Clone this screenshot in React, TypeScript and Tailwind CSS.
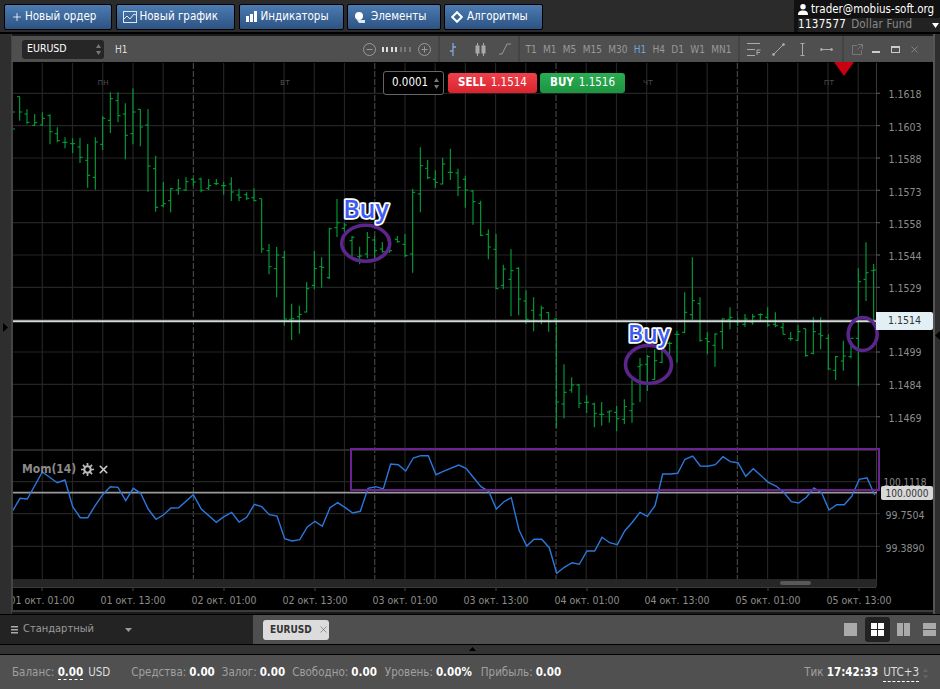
import { Plus, X } from "lucide-react";

type Bar = [number, number, number, number, number];

// x, high, low, open, close read off the chart in 3x crops
const barsA: Bar[] = [
  [59, 20, 92, 20, 66], [81, 58, 103, 72, 97], [104, 72, 108, 106, 98], [127, 67, 107, 105, 85],
  [150, 73, 163, 77, 125], [172, 112, 157, 131, 152], [195, 142, 175, 157, 157], [218, 145, 189, 161, 161],
  [240, 143, 219, 171, 202], [263, 162, 293, 211, 256], [286, 142, 299, 262, 156], [308, 78, 180, 163, 85],
  [331, 7, 129, 91, 26], [354, 7, 97, 32, 77], [376, 40, 208, 72, 136], [399, -5, 163, 131, 66],
  [421, 57, 169, 58, 111], [444, 57, 305, 105, 228], [467, 197, 365, 236, 352], [490, 276, 352, 347, 341],
  [512, 295, 367, 332, 296], [535, 267, 314, 300, 295], [558, 262, 302, 300, 275], [580, 263, 288, 268, 276],
  [603, 263, 307, 267, 301], [626, 267, 300, 295, 287], [649, 267, 285, 281, 281], [671, 275, 314, 287, 287],
  [694, 262, 333, 282, 306], [717, 296, 334, 315, 322], [740, 307, 330, 314, 325], [762, 295, 334, 323, 332],
  [785, 326, 488, 326, 477], [807, 462, 553, 482, 530], [830, 471, 622, 536, 495], [853, 483, 707, 502, 687],
  [875, 641, 750, 688, 686], [898, 647, 731, 680, 673], [920, 576, 667, 666, 596], [943, 483, 598, 586, 536],
];

const barsB: Bar[] = [
  [5, 382, 473, 410, 412], [28, 293, 447, 443, 296], [51, 207, 321, 293, 278], [73, 278, 305, 295, 285],
  [96, 318, 378, 332, 322], [119, 350, 403, 380, 378], [142, 306, 385, 372, 322], [164, 318, 387, 330, 362],
  [187, 336, 368, 357, 365], [209, 330, 368, 330, 362], [232, 318, 338, 328, 335], [255, 312, 381, 343, 377],
  [278, 176, 428, 372, 187], [301, 52, 247, 192, 107], [323, 90, 148, 115, 143], [346, 121, 174, 148, 157],
  [368, 83, 163, 162, 102], [391, 56, 150, 127, 127], [414, 116, 198, 129, 172], [436, 137, 233, 148, 180],
  [459, 181, 284, 183, 215], [482, 212, 318, 220, 316], [505, 298, 388, 313, 351], [528, 312, 477, 358, 476],
  [550, 404, 478, 466, 417], [573, 358, 559, 448, 422], [596, 412, 556, 415, 507], [618, 481, 582, 513, 568],
  [641, 502, 604, 541, 574], [664, 527, 583, 555, 534], [686, 547, 605, 548, 575], [709, 563, 893, 567, 816],
  [732, 703, 865, 822, 787], [755, 742, 788, 780, 765], [777, 762, 834, 765, 820], [800, 796, 849, 817, 817],
  [823, 818, 892, 822, 850], [845, 816, 887, 853, 853], [868, 842, 878, 846, 843], [890, 828, 904, 847, 866],
  [913, 808, 882, 868, 830], [936, 750, 878, 842, 822],
];

const barsC: Bar[] = [
  [0, 384, 516, 410, 405], [22, 375, 483, 403, 380], [44, 358, 450, 448, 392], [66, 360, 400, 397, 358],
  [89, 335, 372, 340, 340], [111, 302, 398, 313, 313], [134, 187, 310, 307, 247], [157, 82, 270, 254, 212],
  [180, 202, 335, 221, 331], [202, 307, 373, 326, 335], [225, 310, 410, 346, 312], [247, 265, 358, 305, 267],
  [270, 232, 298, 268, 262], [293, 262, 288, 275, 275], [315, 252, 290, 283, 267], [338, 252, 284, 276, 260],
  [361, 250, 274, 254, 254], [383, 232, 290, 262, 285], [406, 247, 292, 283, 287], [429, 278, 313, 292, 313],
  [452, 306, 332, 326, 326], [474, 285, 333, 331, 305], [497, 296, 380, 296, 377], [520, 262, 373, 370, 305],
  [542, 262, 358, 312, 317], [565, 313, 420, 325, 417], [587, 378, 450, 421, 380], [610, 332, 422, 393, 378],
  [633, 345, 385, 380, 325], [655, 115, 468, 325, 155], [678, 37, 213, 148, 128], [701, 102, 270, 122, 120],
];

const momA = [
  38, 212, 60, 175, 82, 177, 127, 96, 172, 128, 195, 120, 218, 200, 241, 233, 263, 233, 286, 196, 308, 164, 331, 140,
  354, 142, 377, 182, 400, 145, 422, 160, 445, 208, 468, 238, 490, 225, 513, 204, 536, 203, 580, 164, 604, 207, 649, 247,
  672, 230, 695, 217, 717, 246, 740, 232, 763, 193, 785, 200, 808, 224, 831, 228, 854, 296, 876, 303, 899, 299, 922, 261,
  945, 244, 967, 259, 990, 203, 1013, 188, 1036, 203, 1058, 219, 1081, 214, 1104, 145, 1127, 140, 1150, 147, 1172, 72,
  1195, 74, 1217, 93, 1240, 54, 1262, 47, 1285, 47, 1308, 104, 1330, 94, 1376, 75, 1398, 85, 1410, 100,
];

const momB = [
  0, 100, 33, 140, 56, 154, 79, 207, 102, 185, 124, 173, 147, 270, 170, 318, 192, 298, 215, 298, 238, 323, 260, 400,
  283, 382, 306, 368, 328, 373, 351, 333, 374, 333, 396, 292, 419, 308, 442, 314, 464, 273, 487, 247, 510, 217, 532, 229,
  555, 197, 578, 102, 600, 102, 623, 100, 645, 58, 668, 48, 691, 78, 713, 79, 736, 74, 759, 50, 781, 65, 804, 68,
  827, 109, 850, 86, 895, 127, 918, 138, 941, 157, 964, 185, 986, 189, 1009, 172, 1032, 144, 1055, 159, 1077, 210,
  1100, 194, 1123, 194, 1145, 169, 1168, 118, 1191, 113, 1214, 165,
];

const toPoints = (values: number[], ox: number, oy: number) => {
  const out: string[] = [];
  for (let i = 0; i < values.length; i += 2) {
    out.push(`${(ox + values[i] / 3).toFixed(1)},${(oy + values[i + 1] / 3).toFixed(1)}`);
  }
  return out.join(" ");
};

const gridX = Array.from({ length: 28 }, (_, i) => 42.3 + 30.22 * i);
const gridY = Array.from({ length: 11 }, (_, i) => 93.3 + 32.34 * i);
const prices: [string, number][] = [
  ["1.1618", 94], ["1.1603", 127], ["1.1588", 159], ["1.1573", 192], ["1.1558", 224], ["1.1544", 256],
  ["1.1529", 288], ["1.1499", 352], ["1.1484", 385], ["1.1469", 418],
];
const dates: [string, number][] = [
  ["01 окт. 01:00", 42], ["01 окт. 13:00", 133], ["02 окт. 01:00", 224], ["02 окт. 13:00", 315],
  ["03 окт. 01:00", 405], ["03 окт. 13:00", 496], ["04 окт. 01:00", 587], ["04 окт. 13:00", 677],
  ["05 окт. 01:00", 768], ["05 окт. 13:00", 859],
];
const days: [string, number][] = [["пн", 103], ["вт", 285], ["чт", 648], ["пт", 829]];
const frames = ["T1", "M1", "M5", "M15", "M30", "H1", "H4", "D1", "W1", "MN1"];

function OhlcBars({ bars, ox, oy }: { bars: Bar[]; ox: number; oy: number }) {
  return (
    <g className="stroke-[#00a33a]" strokeWidth={1.1} fill="none">
      {bars.map(([x, hi, lo, open, close]) => {
        const px = ox + x / 3;
        return (
          <g key={x}>
            <line x1={px} x2={px} y1={oy + hi / 3} y2={oy + lo / 3} />
            <line x1={px - 2.5} x2={px} y1={oy + open / 3} y2={oy + open / 3} />
            <line x1={px} x2={px + 2.5} y1={oy + close / 3} y2={oy + close / 3} />
          </g>
        );
      })}
    </g>
  );
}

function Chart() {
  return (
    <svg viewBox="12 62 921 550" className="block h-[550px] w-[921px]">
      <rect x="12" y="62" width="921" height="550" fill="#000" />
      {gridX.map((x, i) =>
        i % 6 === 5 ? (
          <line key={x} x1={x} x2={x} y1="63" y2="579" stroke="#444" strokeWidth="1.2" strokeDasharray="6 2" />
        ) : (
          <line key={x} x1={x} x2={x} y1="63" y2="579" stroke="#242424" strokeWidth="1.2" />
        ),
      )}
      {gridY.map((y) => (
        <line key={y} x1="12" x2="880" y1={y} y2={y} stroke="#242424" strokeWidth="1.2" />
      ))}
      {[481.7, 513.7, 546.3].map((y) => (
        <line key={y} x1="12" x2="880" y1={y} y2={y} stroke="#242424" strokeWidth="1.2" />
      ))}
      <line x1="12" x2="876" y1="450" y2="450" stroke="#363636" strokeWidth="1.5" />
      <line x1="876.5" x2="876.5" y1="63" y2="587" stroke="#3a3a3a" />

      {days.map(([d, x]) => (
        <text key={d} x={x} y="85" textAnchor="middle" fontSize="9.5" fill="#4a4a4a">
          {d}
        </text>
      ))}

      <OhlcBars bars={barsA} ox={0} oy={90} />
      <OhlcBars bars={barsB} ox={320} oy={130} />
      <OhlcBars bars={barsC} ox={640} oy={230} />
      <line x1="12" x2="15" y1="129" y2="129" stroke="#00a33a" />
      <line x1="12" x2="15" y1="112" y2="112" stroke="#00a33a" />

      <line x1="12" x2="877" y1="321.3" y2="321.3" stroke="#d5dcdc" strokeWidth="2" />
      <line x1="12" x2="877" y1="492.6" y2="492.6" stroke="#9a9a9a" strokeWidth="1.6" />

      <polyline points={toPoints(momA, 0, 440)} fill="none" stroke="#2b78dc" strokeWidth="1.4" />
      <polyline points={toPoints(momB, 470, 440)} fill="none" stroke="#2b78dc" strokeWidth="1.4" />

      <rect x="351" y="449" width="528" height="41" fill="none" stroke="#6b2391" strokeWidth="2" />
      <ellipse cx="365.7" cy="243.3" rx="24" ry="18" fill="none" stroke="#5c258c" strokeWidth="3.6" />
      <ellipse cx="648.5" cy="364.5" rx="23" ry="19" fill="none" stroke="#5c258c" strokeWidth="3.6" />
      <ellipse cx="862.7" cy="334" rx="14.5" ry="16.5" fill="none" stroke="#5c258c" strokeWidth="3.6" />

      {[[366, 218, 25], [649, 342, 23]].map(([x, y, size]) => (
        <text
          key={x}
          x={x}
          y={y}
          textAnchor="middle"
          fontSize={size}
          fontWeight="600"
          fill="#3f5cf2"
          stroke="#fff"
          strokeWidth="3.5"
          strokeLinejoin="round"
          paintOrder="stroke"
          className="font-['Open_Sans',sans-serif]"
        >
          Buy
        </text>
      ))}

      <polygon points="834,62 854,62 844,76" fill="#c9000f" />

      <rect x="12" y="579" width="864.5" height="8" fill="#262626" />
      <line x1="12" x2="876" y1="587.5" y2="587.5" stroke="#3a3a3a" />
      <rect x="780" y="581" width="31" height="4" rx="2" fill="#585858" />
      {dates.map(([, x]) => (
        <line key={x} x1={x} x2={x} y1="588" y2="591" stroke="#444" />
      ))}
      {dates.map(([d, x]) => (
        <text key={d} x={x} y="604" textAnchor="middle" fontSize="10.5" fill="#8d8d8d">
          {d}
        </text>
      ))}

      {gridY.map((y) => (
        <line key={y} x1="876" x2="880" y1={y} y2={y} stroke="#555" />
      ))}
      {prices.map(([p, y]) => (
        <text key={p} x="905" y={y + 4} textAnchor="middle" fontSize="10.5" fill="#8d8d8d">
          {p}
        </text>
      ))}
      <text x="905" y="486" textAnchor="middle" fontSize="10" fill="#8d8d8d">
        100.1118
      </text>
      {[["99.7504", 519], ["99.3890", 552]].map(([t, y]) => (
        <text key={t} x="905" y={y} textAnchor="middle" fontSize="10.5" fill="#8d8d8d">
          {t}
        </text>
      ))}
      <line x1="12.5" x2="12.5" y1="62" y2="612" stroke="#444" />
      <rect x="12" y="610" width="921" height="2" fill="#3c3c3c" />
    </svg>
  );
}

function NavButton({ width, icon, label, gap }: { width: string; icon: React.ReactNode; label: string; gap: string }) {
  return (
    <button
      className={`flex h-[26px] items-center rounded-[2px] border border-black bg-gradient-to-b from-[#4c7cb2] to-[#2d5383] pl-[6px] text-[11.5px] text-white ${width} ${gap}`}
    >
      {icon}
      {label}
    </button>
  );
}

function Spinner() {
  return (
    <svg width="5" height="11" viewBox="0 0 5 11" className="fill-[#777]">
      <path d="M2.5 0 5 4H0zM2.5 11 0 7h5z" />
    </svg>
  );
}

function Header() {
  return (
    <div className="flex h-[34px] items-start justify-between border-b-2 border-black bg-[#2b2b2b]">
      <div className="flex gap-[3.5px] pl-[4px] pt-[3.5px]">
        <NavButton width="w-[108px]" gap="gap-[2px]" icon={<Plus size={12} strokeWidth={1.6} />} label="Новый ордер" />
        <NavButton
          width="w-[119.5px]"
          gap="gap-[3px]"
          icon={
            <svg width="14" height="12" viewBox="0 0 14 12" fill="none" stroke="#dfe8f2">
              <rect x="0.5" y="0.5" width="13" height="11" />
              <path d="M1 8l3-3 3 3 4-5 2 1" />
            </svg>
          }
          label="Новый график"
        />
        <NavButton
          width="w-[105px]"
          gap="gap-[4px]"
          icon={
            <svg width="11" height="11" viewBox="0 0 11 11" fill="#fff">
              <path d="M0 5h3v6H0zM4 3h3v8H4zM8 0h3v11H8z" />
            </svg>
          }
          label="Индикаторы"
        />
        <NavButton
          width="w-[93.5px]"
          gap="gap-[5px]"
          icon={
            <svg width="12" height="12" viewBox="0 0 12 12" fill="#fff">
              <circle cx="5" cy="5" r="4" />
              <path d="M3 9h8v3H5z" fill="#dfe8f2" />
            </svg>
          }
          label="Элементы"
        />
        <NavButton
          width="w-[98.5px]"
          gap="gap-[4px]"
          icon={
            <svg width="12" height="12" viewBox="0 0 12 12" fill="none" stroke="#fff" strokeWidth="2">
              <path d="M6 1.2 10.8 6 6 10.800 1.200 6z" />
            </svg>
          }
          label="Алгоритмы"
        />
      </div>
      <div className="flex h-[32px] w-[146px] flex-col bg-[#111] pl-[4px]">
        <div className="flex h-[18px] items-center gap-[3px] pt-[1px] text-[11.5px] text-white">
          <svg width="10" height="11" viewBox="0 0 11 12" fill="#fff">
            <circle cx="5.500" cy="3" r="3" />
            <path d="M0 12c0-4 2-5 5.500-5S11 8 11 12z" />
          </svg>
          trader@mobius-soft.org
        </div>
        <div className="flex h-[14px] items-center bg-[#222] text-[11.5px]">
          <span className="tracking-[0.3px] text-white">1137577</span>
          <span className="ml-[5px] tracking-[0.2px] text-[#8a8a8a]">Dollar Fund</span>
          <svg width="7" height="5" viewBox="0 0 7 5" className="ml-auto mr-[1px] fill-white">
            <path d="M0 0h7L3.500 5z" />
          </svg>
        </div>
      </div>
    </div>
  );
}

function Toolbar() {
  return (
    <div className="flex h-[26px] w-[921px] items-center bg-[#4f4f4f] pl-[10px] text-[#999]">
      <div className="flex h-[19px] w-[82px] items-center justify-between rounded-[3px] bg-[#262626] pl-[5px] pr-[3px] text-[10.5px] text-white">
        EURUSD
        <Spinner />
      </div>
      <span className="ml-[11px] text-[10px] text-[#ddd]">H1</span>
      <div className="ml-[235px] flex items-center">
        <svg width="13" height="13" viewBox="0 0 13 13" fill="none" stroke="#999">
          <circle cx="6.500" cy="6.500" r="6" />
          <path d="M3.500 6.500h6" />
        </svg>
        <div className="ml-[6px] mr-[7px] flex gap-[2.5px]">
          {[0, 1, 2, 3, 4, 5, 6].map((i) => (
            <span key={i} className={`h-[5px] w-[2px] ${i < 4 ? "bg-[#ddd]" : "bg-[#777]"}`} />
          ))}
        </div>
        <svg width="13" height="13" viewBox="0 0 13 13" fill="none" stroke="#999">
          <circle cx="6.500" cy="6.500" r="6" />
          <path d="M3.500 6.500h6M6.500 3.500v6" />
        </svg>
      </div>
      <div className="ml-[7px] flex h-full w-[82px] items-center border-x-2 border-[#444] pl-[9px]">
        <svg width="8" height="13" viewBox="0 0 8 13" fill="none" stroke="#7fa8d8" strokeWidth="1.300">
          <path d="M4 0v13M1 8h3M4 4h3" />
        </svg>
        <svg width="11" height="13" viewBox="0 0 11 13" fill="none" stroke="#aaa" className="ml-[18px]">
          <path d="M2.500 0v13M8.500 0v13" />
          <rect x="1" y="3" width="3" height="7" fill="#aaa" />
          <rect x="7" y="3" width="3" height="7" fill="#aaa" />
        </svg>
        <svg width="12" height="12" viewBox="0 0 12 12" fill="none" stroke="#999" className="ml-[13px]">
          <path d="M0 11h3L8 1h4" />
        </svg>
      </div>
      <div className="flex h-full w-[220px] items-center justify-between border-r-2 border-[#444] pl-[6px] pr-[6px] text-[10px]">
        {frames.map((f) => (
          <span key={f} className={f === "H1" ? "text-[#6fa3dc]" : ""}>
            {f}
          </span>
        ))}
      </div>
      <div className="flex h-full w-[104px] items-center gap-[11px] border-r-2 border-[#444] pl-[7px]">
        <svg width="14" height="13" viewBox="0 0 14 13" fill="none" stroke="#aaa">
          <path d="M0 .5h13M0 6.500h8M0 12.500h8M10 12V7h3.500M10 9.500h3" />
        </svg>
        <svg width="13" height="13" viewBox="0 0 13 13" fill="#aaa" stroke="#aaa">
          <path d="M2 11 11 2" />
          <circle cx="1.500" cy="11.500" r="1" />
          <circle cx="11.500" cy="1.500" r="1" />
        </svg>
        <svg width="13" height="13" viewBox="0 0 13 13" fill="#aaa" stroke="#aaa">
          <path d="M6.500 1v11" />
          <path d="M4.500 .5h4M4.500 12.500h4" />
        </svg>
        <svg width="13" height="5" viewBox="0 0 13 5" fill="#aaa" stroke="#aaa">
          <path d="M1 2.500h11" />
          <circle cx="1.500" cy="2.500" r="1" />
          <circle cx="11.500" cy="2.500" r="1" />
        </svg>
      </div>
      <div className="flex items-center pl-[8px]">
        <svg width="11" height="11" viewBox="0 0 11 11" fill="none" stroke="#777">
          <path d="M9.500 6v4.500h-9v-9H5M6 .5h4.500V5M10.500.5 5.500 5.500" />
        </svg>
        <span className="ml-[9px] mt-[6px] h-[2px] w-[8px] bg-[#ccc]" />
        <span className="ml-[11px] h-[7px] w-[9px] border border-t-2 border-[#ccc]" />
        <X size={11} className="ml-[9px] text-[#999]" strokeWidth={1.500} />
      </div>
    </div>
  );
}

function LayoutIcons() {
  return (
    <div className="ml-auto flex items-center pr-[4px]">
      <span className="mr-[8px] h-[13px] w-[13px] bg-[#aaa]" />
      <div className="flex h-[25px] w-[25px] items-center justify-center rounded-[3px] bg-[#222]">
        <div className="grid h-[13px] w-[13px] grid-cols-2 gap-[1px]">
          <span className="bg-white" />
          <span className="bg-white" />
          <span className="bg-white" />
          <span className="bg-white" />
        </div>
      </div>
      <div className="ml-[7px] grid h-[13px] w-[13px] grid-cols-2 gap-[1px]">
        <span className="bg-[#aaa]" />
        <span className="bg-[#aaa]" />
      </div>
      <div className="ml-[13px] grid h-[13px] w-[13px] grid-rows-2 gap-[1px]">
        <span className="bg-[#aaa]" />
        <span className="bg-[#aaa]" />
      </div>
    </div>
  );
}

function Stat({ label, value, className }: { label: string; value: string; className?: string }) {
  return (
    <span className={className}>
      {label}:<b className="ml-[3px] font-bold text-white">{value}</b>
    </span>
  );
}

export default function App() {
  return (
    <div className="flex h-[689px] w-[940px] flex-col overflow-hidden bg-[#2b2b2b] font-['DejaVu_Sans_Condensed','Noto_Sans',sans-serif]">
      <Header />
      <div className="flex h-[580px] bg-[#1a1a1a]">
        <div className="flex w-[12px] items-center border-r border-[#444] bg-[#2e2e2e] pl-[3px] pt-[6px]">
          <svg width="5" height="9" viewBox="0 0 5 9" className="fill-black">
            <path d="M0 0l5 4.500L0 9z" />
          </svg>
        </div>
        <div className="relative w-[921px] pt-[2px]">
          <Toolbar />
          <Chart />
          <div className="absolute left-[371px] top-[37px] flex items-center gap-[4px]">
            <div className="flex h-[24px] w-[61px] items-center justify-between rounded-[3px] border border-[#666] bg-black pl-[8px] pr-[4px] text-[11.500px] text-white">
              0.0001
              <Spinner />
            </div>
            <div className="flex h-[20px] w-[89px] items-center justify-center gap-[5px] rounded-[3px] bg-gradient-to-b from-[#f0404a] to-[#d9232e] text-[11.500px] text-white">
              <b>SELL</b> 1.1514
            </div>
            <div className="ml-[-1px] flex h-[20px] w-[85px] items-center justify-center gap-[5px] rounded-[3px] bg-gradient-to-b from-[#2bad52] to-[#1d9440] text-[11.500px] text-white">
              <b>BUY</b> 1.1516
            </div>
          </div>
          <div className="absolute left-[10px] top-[426px] flex items-center text-[12px] font-bold text-[#8a8a8a]">
            Mom(14)
            <svg width="13" height="13" viewBox="0 0 12 12" className="ml-[5px]" fill="none" stroke="#bbb">
              <circle cx="6" cy="6" r="3" strokeWidth="2" />
              <path d="M6 0v2.500M6 9.500V12M0 6h2.500M9.500 6H12M1.800 1.800l1.700 1.700M8.500 8.500l1.700 1.700M10.200 1.800 8.500 3.500M3.500 8.500l-1.700 1.700" strokeWidth="1.600" />
            </svg>
            <X size={13} strokeWidth={3} className="ml-[3px] text-[#ccc]" />
          </div>
          <div className="absolute left-[864px] top-[278px] flex h-[18px] w-[57px] items-center justify-center rounded-r-[2px] bg-[#e2f0f5] text-[10.500px] text-[#333]">
            1.1514
          </div>
          <div className="absolute left-[869px] top-[452px] flex h-[14px] w-[52px] items-center justify-center rounded-[2px] bg-[#d8d8d8] text-[10px] text-[#333]">
            100.0000
          </div>
        </div>
        <div className="flex flex-1 items-center border-l-2 border-[#555] bg-[#2e2e2e] pt-[22px]">
          <svg width="5" height="9" viewBox="0 0 5 9" className="fill-black">
            <path d="M5 0 0 4.500 5 9z" />
          </svg>
        </div>
      </div>
      <div className="flex h-[31px] items-stretch border-y border-black">
        <div className="flex w-[253px] items-center bg-[#232323] pl-[11px] text-[11px] text-[#9a9a9a]">
          <svg width="7" height="8" viewBox="0 0 7 8" className="fill-[#aaa]">
            <path d="M0 0h7v1.500H0zM0 3h7v1.500H0zM0 6h7v1.500H0z" />
          </svg>
          <span className="ml-[5px]">Стандартный</span>
          <svg width="7" height="4" viewBox="0 0 7 4" className="ml-[31px] fill-[#999]">
            <path d="M0 0h7L3.500 4z" />
          </svg>
        </div>
        <div className="flex flex-1 items-center bg-[#4f4f4f] pl-[10px]">
          <div className="flex h-[20px] w-[66px] items-center gap-[6px] rounded-[3px] bg-[#dcdcdc] pl-[7px] text-[10px] font-bold text-[#333]">
            EURUSD
            <X size={11} strokeWidth={1.200} className="text-[#555]" />
          </div>
          <LayoutIcons />
        </div>
      </div>
      <div className="flex h-[10px] justify-center border-b border-black bg-[#333]">
        <svg width="7" height="4" viewBox="0 0 7 4" className="ml-[5px] mt-[2px] fill-black">
          <path d="M3.500 0 7 4H0z" />
        </svg>
      </div>
      <div className="flex flex-1 items-center bg-[#505050] pl-[12px] pr-[12px] pt-[2px] text-[11.500px] text-[#a0a0a0]">
        <span>
          Баланс:{" "}
          <b className="border-b border-dashed border-white font-bold text-white">0.00</b>
          <span className="ml-[5px] text-[#ddd]">USD</span>
        </span>
        <Stat label="Средства" value="0.00" className="ml-[21px]" />
        <Stat label="Залог" value="0.00" className="ml-[7px]" />
        <Stat label="Свободно" value="0.00" className="ml-[7px]" />
        <Stat label="Уровень" value="0.00%" className="ml-[8px]" />
        <Stat label="Прибыль" value="0.00" className="ml-[9px]" />
        <span className="ml-auto">
          Тик <b className="font-bold text-white">17:42:33</b>
        </span>
        <span className="ml-[5px] border-b border-dashed border-white text-[#ddd]">UTC+3</span>
        <span className="ml-[4px] opacity-50">
          <Spinner />
        </span>
      </div>
    </div>
  );
}
